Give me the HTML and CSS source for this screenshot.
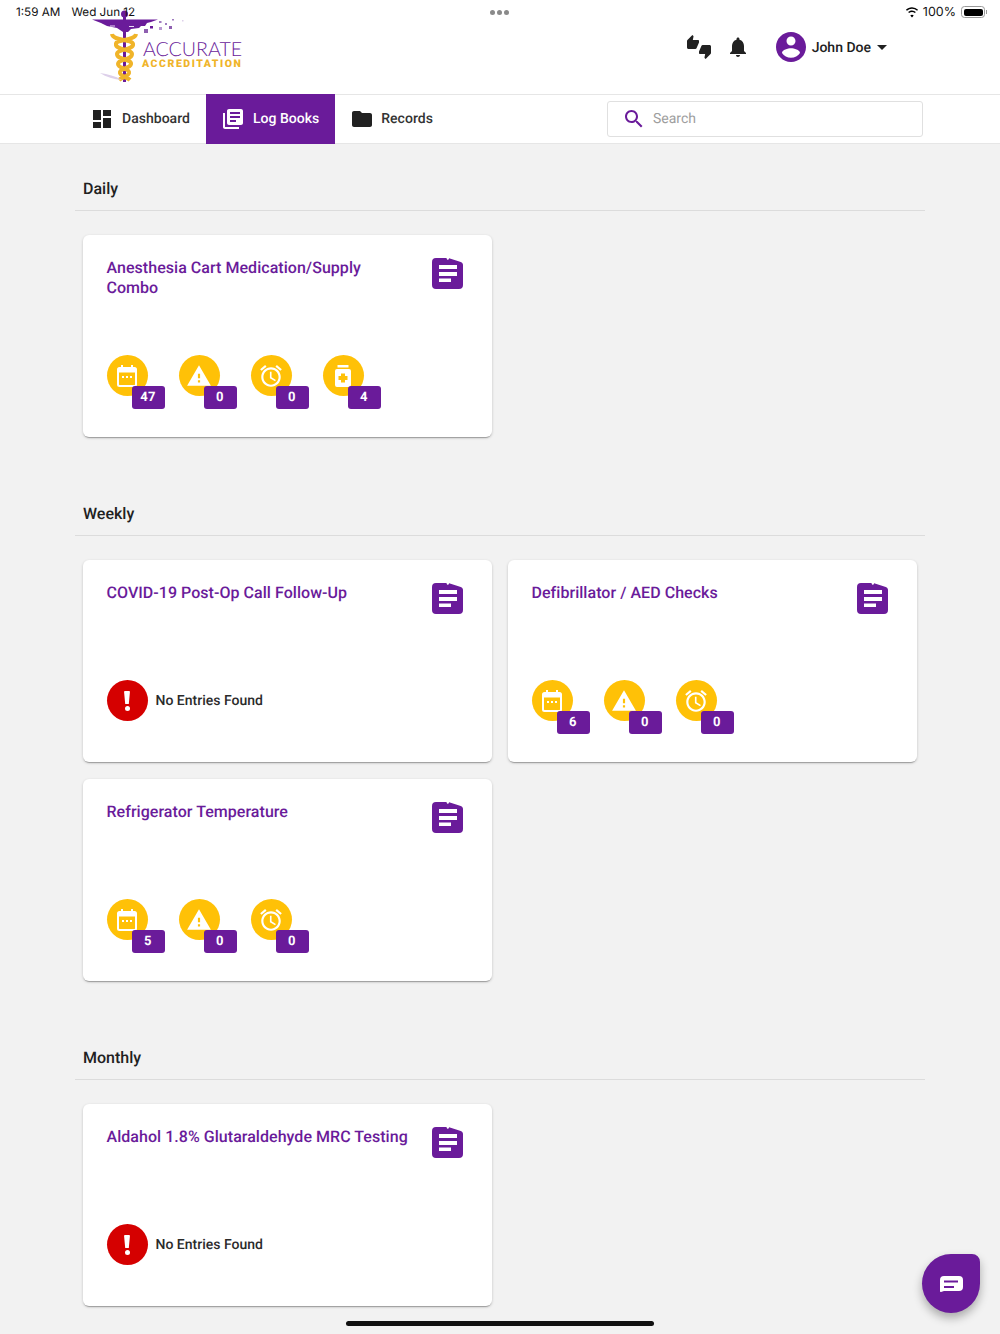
FILE: index.html
```html
<!DOCTYPE html>
<html lang="en">

<head>
    <meta charset="UTF-8">
    <meta name="viewport" content="width=device-width, initial-scale=1.0">
    <title>Log Books</title>
    <link rel="stylesheet" href="styles.css">
</head>

<body>
    <svg class="sprites" width="0" height="0">
        <symbol id="i-dashboard" viewBox="0 0 18 18"><path d="M0 10h8V0H0v10zm0 8h8v-6H0v6zm10 0h8V8h-8v10zm0-18v6h8V0h-8z"/></symbol>
        <symbol id="i-books" viewBox="0 0 24 24"><path d="M4 6H2v14c0 1.1.9 2 2 2h14v-2H4V6zm16-4H8c-1.1 0-2 .9-2 2v12c0 1.1.9 2 2 2h12c1.100 0 2-.9 2-2V4c0-1.100-.9-2-2-2zm-1 9H9V9h10v2zm-4 4H9v-2h6v2zm4-8H9V5h10v2z"/></symbol>
        <symbol id="i-folder" viewBox="0 0 24 24"><path d="M10 4H4c-1.100 0-1.990.9-1.990 2L2 18c0 1.100.9 2 2 2h16c1.100 0 2-.9 2-2V8c0-1.100-.9-2-2-2h-8l-2-2z"/></symbol>
        <symbol id="i-search" viewBox="0 0 24 24"><path d="M15.500 14h-.79l-.28-.27C15.410 12.590 16 11.110 16 9.500 16 5.910 13.090 3 9.500 3S3 5.910 3 9.500 5.910 16 9.500 16c1.610 0 3.090-.59 4.230-1.570l.27.28v.79l5 4.990L20.490 19l-4.990-5zm-6 0C7.010 14 5 11.990 5 9.500S7.010 5 9.500 5 14 7.010 14 9.500 11.990 14 9.500 14z"/></symbol>
        <symbol id="i-thumbs" viewBox="0 0 24 24"><path d="M12 6c0-.55-.45-1-1-1H5.820l.66-3.180.02-.23c0-.31-.13-.59-.33-.8L5.380 0 .44 4.940C.17 5.210 0 5.590 0 6v6.500c0 .83.67 1.500 1.500 1.500h6.750c.62 0 1.150-.38 1.380-.91l2.260-5.290c.07-.17.11-.36.11-.55V6zm10.500 4h-6.750c-.62 0-1.150.38-1.380.91l-2.260 5.290c-.07.17-.11.36-.11.55V18c0 .55.45 1 1 1h5.180l-.66 3.180-.02.24c0 .31.13.59.33.8l.79.78 4.940-4.940c.27-.27.44-.65.44-1.060v-6.500c0-.83-.67-1.500-1.500-1.500z"/></symbol>
        <symbol id="i-bell" viewBox="0 0 24 24"><path d="M12 22c1.100 0 2-.9 2-2h-4c0 1.100.89 2 2 2zm6-6v-5c0-3.070-1.640-5.640-4.500-6.320V4c0-.83-.67-1.500-1.500-1.500s-1.500.67-1.500 1.500v.68C7.630 5.360 6 7.920 6 11v5l-2 2v1h16v-1l-2-2z"/></symbol>
        <symbol id="i-account" viewBox="0 0 24 24"><path d="M12 2C6.480 2 2 6.480 2 12s4.480 10 10 10 10-4.480 10-10S17.520 2 12 2zm0 3c1.660 0 3 1.340 3 3s-1.340 3-3 3-3-1.340-3-3 1.340-3 3-3zm0 14.200c-2.500 0-4.710-1.280-6-3.220.03-1.990 4-3.080 6-3.080 1.990 0 5.970 1.090 6 3.080-1.290 1.940-3.500 3.220-6 3.220z"/></symbol>
        <symbol id="i-doc" viewBox="0 0 31 31"><path fill-rule="evenodd" d="M4 0h10.500c.2 1.200.6 1.800 1.300 1.800s1.100-.6 1.300-1.500L28 3.800c2 .7 3 1.800 3 3.200v20a4 4 0 0 1-4 4H4a4 4 0 0 1-4-4V4a4 4 0 0 1 4-4zM7 7v4h18V7H7zm0 7v4h18v-4H7zm0 6.500v3.500h12v-3.500H7z"/></symbol>
        <symbol id="i-calendar" viewBox="0 -1 24 26"><path fill-rule="evenodd" d="M6 1h2v2h8V1h2v2h1.500A2.500 2.500 0 0 1 22 5.500v15a2.500 2.500 0 0 1-2.500 2.500h-15A2.500 2.500 0 0 1 2 20.500v-15A2.500 2.500 0 0 1 4.500 3H6V1zM4 8.500v12c0 .3.200.5.500.5h15c.3 0 .5-.2.500-.5v-12H4zM7 12h2v2H7v-2zm4 0h2v2h-2v-2zm4 0h2v2h-2v-2z"/></symbol>
        <symbol id="i-warning" viewBox="0 0 24 24"><path d="M1 21h22L12 2 1 21zm12-3h-2v-2h2v2zm0-4h-2v-4h2v4z"/></symbol>
        <symbol id="i-alarm" viewBox="0 0 24 24"><path d="M22 5.720l-4.600-3.860-1.290 1.530 4.600 3.860L22 5.720zM7.880 3.390L6.600 1.860 2 5.710l1.290 1.530 4.590-3.850zM12.500 8H11v6l4.750 2.850.75-1.230-4-2.370V8zM12 4c-4.970 0-9 4.030-9 9s4.020 9 9 9c4.970 0 9-4.030 9-9s-4.030-9-9-9zm0 16c-3.870 0-7-3.130-7-7s3.130-7 7-7 7 3.130 7 7-3.130 7-7 7z"/></symbol>
        <symbol id="i-bottle" viewBox="0 -1 24 26"><path fill-rule="evenodd" d="M6.500 1h11v2.500h-11V1zM6 5h12a2 2 0 0 1 2 2v14a2 2 0 0 1-2 2H6a2 2 0 0 1-2-2V7a2 2 0 0 1 2-2zm4 4.500V12H7.500v4H10v2.500h4V16h2.500v-4H14V9.500h-4z"/></symbol>
    </svg>

    <div class="status-bar">
        <span>1:59 AM</span>
        <span>Wed Jun 12</span>
        <span class="status-dots"><i></i><i></i><i></i></span>
        <span class="status-right">
            <svg class="wifi" viewBox="0 0 18 14" width="14" height="11"><path d="M9 2.200c2.500 0 4.800 1 6.500 2.600l1.300-1.400A11.300 11.300 0 0 0 9 .2C6 .2 3.200 1.400 1.200 3.400l1.300 1.400A9.400 9.400 0 0 1 9 2.200zm0 4c1.400 0 2.700.5 3.700 1.500L14 6.300A7.300 7.300 0 0 0 9 4.300c-1.900 0-3.700.8-5 2l1.300 1.400c1-1 2.300-1.500 3.700-1.500zm0 3.800c-.9 0-1.600.3-2.200.9L9 13.300l2.200-2.400c-.6-.6-1.300-.9-2.200-.9z"/></svg>
            <span>100%</span>
            <span class="battery"><i></i></span>
        </span>
    </div>

    <header class="topbar">
        <div class="logo">
            <svg class="logo-mark" viewBox="0 0 105 78" width="105" height="78">
                <path d="M7 9.500H73L66 12l-4 1-2 3h-4l-2 2-8 1-3 3h-5l-6-4-10-2-6-3z" fill="#6a1b9a"/>
                <rect x="38" y="4" width="3" height="68" fill="#6a1b9a"/>
                <circle cx="39.500" cy="4" r="3.500" fill="#6a1b9a"/>
                <path d="M27 24C28 31 47 29 48 34 49 40 32 39 32 44 32 50 47 49 46 54 45 59 34 58 35 63 36 67 42 67 45 70M51 24C50 31 31 29 31 34 30 40 47 39 47 44 47 50 33 49 33 54 33 59 45 58 44 63 43 67 37 67 34 70" fill="none" stroke="#f0b429" stroke-width="4"/>
                <path d="M15 63c8 1 15 3 22 7-8-.6-16-3-22-7z" fill="#ddd0ea"/>
                <rect x="25" y="15.500" width="5" height="1" fill="#e8d8f4"/>
                <rect x="44" y="16" width="5" height="1" fill="#e8d8f4"/>
                <rect x="59" y="19" width="4" height="4" fill="#8e5fb0"/>
                <rect x="65" y="16" width="3" height="2.500" fill="#6a1b9a"/>
                <rect x="74" y="17" width="3" height="3" fill="#b99ad2"/>
                <rect x="74" y="11" width="2.500" height="2" fill="#a07cc0"/>
                <rect x="80" y="13" width="2" height="2" fill="#a07cc0"/>
                <rect x="84" y="16" width="3" height="3" fill="#8e5fb0"/>
                <rect x="87" y="9" width="2" height="1.500" fill="#a07cc0"/>
                <rect x="97" y="10" width="1.500" height="1.500" fill="#ddd0ea"/>
            </svg>
            <div class="logo-text">
                <span class="logo-name">ACCURATE</span>
                <span class="logo-sub">ACCREDITATION</span>
            </div>
        </div>
        <div class="top-actions">
            <svg class="top-icon thumbs"><use href="#i-thumbs"/></svg>
            <svg class="top-icon bell"><use href="#i-bell"/></svg>
            <div class="user">
                <svg class="avatar"><use href="#i-account"/></svg>
                <span class="user-name">John Doe</span>
                <span class="caret"></span>
            </div>
        </div>
    </header>

    <nav class="navbar">
        <a class="nav-item first"><svg class="nav-icon dash"><use href="#i-dashboard"/></svg>Dashboard</a>
        <a class="nav-item active"><svg class="nav-icon"><use href="#i-books"/></svg>Log Books</a>
        <a class="nav-item"><svg class="nav-icon"><use href="#i-folder"/></svg>Records</a>
        <div class="search">
            <svg class="search-icon"><use href="#i-search"/></svg>
            <span>Search</span>
        </div>
    </nav>

    <main class="content">
        <section class="group">
            <h2>Daily</h2>
            <div class="cards">
                <div class="card">
                    <div class="card-head">
                        <h3>Anesthesia Cart Medication/Supply Combo</h3>
                        <svg class="doc"><use href="#i-doc"/></svg>
                    </div>
                    <div class="stats">
                        <div class="stat"><svg><use href="#i-calendar"/></svg><b>47</b></div>
                        <div class="stat"><svg><use href="#i-warning"/></svg><b>0</b></div>
                        <div class="stat"><svg><use href="#i-alarm"/></svg><b>0</b></div>
                        <div class="stat"><svg><use href="#i-bottle"/></svg><b>4</b></div>
                    </div>
                </div>
            </div>
        </section>

        <section class="group">
            <h2>Weekly</h2>
            <div class="cards">
                <div class="card">
                    <div class="card-head">
                        <h3>COVID-19 Post-Op Call Follow-Up</h3>
                        <svg class="doc"><use href="#i-doc"/></svg>
                    </div>
                    <div class="stats">
                        <div class="empty"><span class="empty-mark"></span>No Entries Found</div>
                    </div>
                </div>
                <div class="card">
                    <div class="card-head">
                        <h3>Defibrillator / AED Checks</h3>
                        <svg class="doc"><use href="#i-doc"/></svg>
                    </div>
                    <div class="stats">
                        <div class="stat"><svg><use href="#i-calendar"/></svg><b>6</b></div>
                        <div class="stat"><svg><use href="#i-warning"/></svg><b>0</b></div>
                        <div class="stat"><svg><use href="#i-alarm"/></svg><b>0</b></div>
                    </div>
                </div>
                <div class="card">
                    <div class="card-head">
                        <h3>Refrigerator Temperature</h3>
                        <svg class="doc"><use href="#i-doc"/></svg>
                    </div>
                    <div class="stats">
                        <div class="stat"><svg><use href="#i-calendar"/></svg><b>5</b></div>
                        <div class="stat"><svg><use href="#i-warning"/></svg><b>0</b></div>
                        <div class="stat"><svg><use href="#i-alarm"/></svg><b>0</b></div>
                    </div>
                </div>
            </div>
        </section>

        <section class="group">
            <h2>Monthly</h2>
            <div class="cards">
                <div class="card">
                    <div class="card-head">
                        <h3>Aldahol 1.8% Glutaraldehyde MRC Testing</h3>
                        <svg class="doc"><use href="#i-doc"/></svg>
                    </div>
                    <div class="stats">
                        <div class="empty"><span class="empty-mark"></span>No Entries Found</div>
                    </div>
                </div>
            </div>
        </section>
    </main>

    <button class="chat">
        <svg viewBox="0 0 23 16" width="23" height="16"><path fill-rule="evenodd" d="M4 0h15a4 4 0 0 1 4 4v7a4 4 0 0 1-4 4H4l-3 1c-.6 0-1-.4-1-1V4a4 4 0 0 1 4-4zm0 4.500v2h14v-2H4zm0 5.500v2h10v-2H4z"/></svg>
    </button>
    <div class="home-bar"></div>
</body>

</html>
```

FILE: styles.css
```css
/* Reset Styles */
* {
    box-sizing: border-box;
    margin: 0;
    padding: 0;
}

body {
    position: relative;
    height: 1334px;
    overflow: hidden;
    background-color: #f2f2f2;
    color: #212121;
    font-family: Roboto, 'Liberation Sans', sans-serif;
    text-rendering: geometricPrecision;
}

.sprites {
    position: absolute;
}

/* iPad status bar */
.status-bar {
    position: absolute;
    top: 0;
    left: 0;
    right: 0;
    z-index: 5;
    display: flex;
    gap: 11px;
    height: 24px;
    padding: 0 15px 0 16px;
    align-items: center;
    font-family: Inter, 'Liberation Sans', sans-serif;
    font-size: 11.700px;
    color: #111;
}

.status-dots {
    position: absolute;
    left: 490px;
    top: 10px;
    display: flex;
    gap: 2px;
}

.status-dots i {
    width: 5px;
    height: 5px;
    border-radius: 50%;
    background-color: #8a8a8a;
}

.status-right {
    display: flex;
    align-items: center;
    gap: 4px;
    margin-left: auto;
    font-size: 12.500px;
}

.battery {
    position: relative;
    width: 24px;
    height: 12px;
    padding: 1.500px;
    margin-left: 1px;
    border: 1px solid #999;
    border-radius: 3.500px;
}

.battery::after {
    content: "";
    position: absolute;
    right: -3px;
    top: 3px;
    width: 1.500px;
    height: 4px;
    background-color: #999;
}

.battery i {
    display: block;
    height: 100%;
    border-radius: 2px;
    background-color: #000;
}

/* Top Bar */
.topbar {
    display: flex;
    justify-content: space-between;
    height: 95px;
    padding: 0 113px 0 85px;
    background-color: #fff;
    border-bottom: 1px solid #e6e6e6;
}

.logo {
    position: relative;
    padding-top: 10px;
}

.logo-text {
    position: absolute;
    left: 58px;
    top: 40px;
    display: flex;
    flex-direction: column;
}

.logo-name {
    font-family: Lato, 'Liberation Sans', sans-serif;
    font-size: 19.600px;
    line-height: 20px;
    font-weight: 300;
    color: #6a1b9a;
}

.logo-sub {
    margin: -1px 0 0 -1px;
    font-family: Roboto, 'Liberation Sans', sans-serif;
    font-size: 10.500px;
    line-height: 10px;
    font-weight: 900;
    letter-spacing: 1.550px;
    color: #f0b429;
}

.top-actions {
    display: flex;
    align-items: center;
}

.top-icon {
    fill: #212121;
}

.thumbs {
    width: 24px;
    height: 24px;
    margin-right: 15px;
}

.bell {
    width: 24px;
    height: 24px;
    margin-right: 23px;
}

.user {
    display: flex;
    align-items: center;
    font-size: 14px;
    font-weight: 500;
}

.user-name {
    padding-top: 1px;
}

.avatar {
    width: 36px;
    height: 36px;
    margin-right: 3px;
    fill: #6a1b9a;
}

.caret {
    width: 0;
    height: 0;
    margin-left: 6px;
    border-left: 5px solid transparent;
    border-right: 5px solid transparent;
    border-top: 5px solid #212121;
}

/* Nav Bar */
.navbar {
    display: flex;
    align-items: stretch;
    height: 49px;
    padding: 0 77px 0 81px;
    background-color: #fff;
    border-bottom: 1px solid #e6e6e6;
}

.nav-item {
    display: flex;
    align-items: center;
    gap: 7px;
    padding: 0 16px 0 15px;
    font-size: 14px;
    font-weight: 500;
    letter-spacing: 0.020px;
    color: #333;
}

.nav-item.first {
    gap: 11px;
    padding-left: 12px;
}

.nav-item.active {
    gap: 8px;
    margin: -1px 0;
    background-color: #6a1b9a;
    color: #fff;
}

.nav-icon {
    width: 24px;
    height: 24px;
    fill: #212121;
}

.nav-icon.dash {
    width: 18px;
    height: 18px;
}

.active .nav-icon {
    fill: #fff;
}

.search {
    display: flex;
    align-items: center;
    gap: 7px;
    width: 316px;
    height: 36px;
    margin: 6px 0 0 auto;
    padding-left: 14px;
    background-color: #fff;
    border: 1px solid #e0e0e0;
    border-radius: 3px;
    font-size: 14px;
    color: #9e9e9e;
}

.search-icon {
    width: 24px;
    height: 24px;
    fill: #6a1b9a;
}

/* Sections */
.content {
    padding: 0 75px;
}

.group {
    margin-bottom: 32px;
}

.group h2 {
    height: 67px;
    padding: 36px 0 0 8px;
    border-bottom: 1px solid #dcdcdc;
    font-size: 16px;
    line-height: 18px;
    font-weight: 500;
    color: #212121;
}

.cards {
    display: grid;
    grid-template-columns: 409px 409px;
    gap: 17px 16px;
    padding: 24px 0 0 8px;
}

/* Cards */
.card {
    height: 202px;
    padding: 23px 29px 0 23.500px;
    background-color: #fff;
    border-radius: 6px;
    box-shadow: 0 1px 3px rgba(0, 0, 0, 0.2), 0 2px 1px -1px rgba(0, 0, 0, 0.25);
}

.card-head {
    display: flex;
    justify-content: space-between;
    height: 97px;
}

.card-head h3 {
    width: 305px;
    font-size: 16px;
    line-height: 20px;
    font-weight: 500;
    letter-spacing: 0.040px;
    color: #6a1b9a;
}

.doc {
    flex: none;
    width: 31px;
    height: 31px;
    fill: #6a1b9a;
}

.stats {
    display: flex;
    gap: 31px;
}

.stat {
    position: relative;
    display: flex;
    align-items: center;
    justify-content: center;
    width: 41px;
    height: 41px;
    border-radius: 50%;
    background-color: #ffc107;
}

.stat svg {
    width: 26px;
    height: 26px;
    fill: #fff;
}

.stat b {
    position: absolute;
    left: 25px;
    top: 31px;
    width: 33px;
    height: 23px;
    border-radius: 3px;
    background-color: #6a1b9a;
    color: #fff;
    font-size: 13px;
    line-height: 24px;
    font-weight: 700;
    text-align: center;
    letter-spacing: 0.4px;
}

.empty {
    display: flex;
    align-items: center;
    gap: 8px;
    font-size: 14px;
    font-weight: 500;
    color: #2b2b2b;
}

.empty-mark {
    position: relative;
    width: 41px;
    height: 41px;
    border-radius: 50%;
    background-color: #d50000;
}

.empty-mark::before {
    content: "";
    position: absolute;
    left: 17.500px;
    top: 11px;
    width: 6px;
    height: 13px;
    border-radius: 1px;
    background-color: #fff;
    clip-path: polygon(0 0, 100% 0, 80% 100%, 20% 100%);
}

.empty-mark::after {
    content: "";
    position: absolute;
    left: 18px;
    top: 26px;
    width: 5px;
    height: 5px;
    border-radius: 50%;
    background-color: #fff;
}

/* Floating chat + home indicator */
.chat {
    position: absolute;
    left: 922px;
    top: 1254px;
    display: flex;
    align-items: center;
    justify-content: center;
    width: 58px;
    height: 59px;
    border: none;
    border-radius: 50% 8px 50% 50%;
    background-color: #6a1b9a;
    box-shadow: 0 5px 10px rgba(0, 0, 0, 0.3);
    fill: #fff;
}

.home-bar {
    position: absolute;
    left: 346px;
    top: 1321px;
    width: 308px;
    height: 5px;
    border-radius: 3px;
    background-color: #111;
}
```
